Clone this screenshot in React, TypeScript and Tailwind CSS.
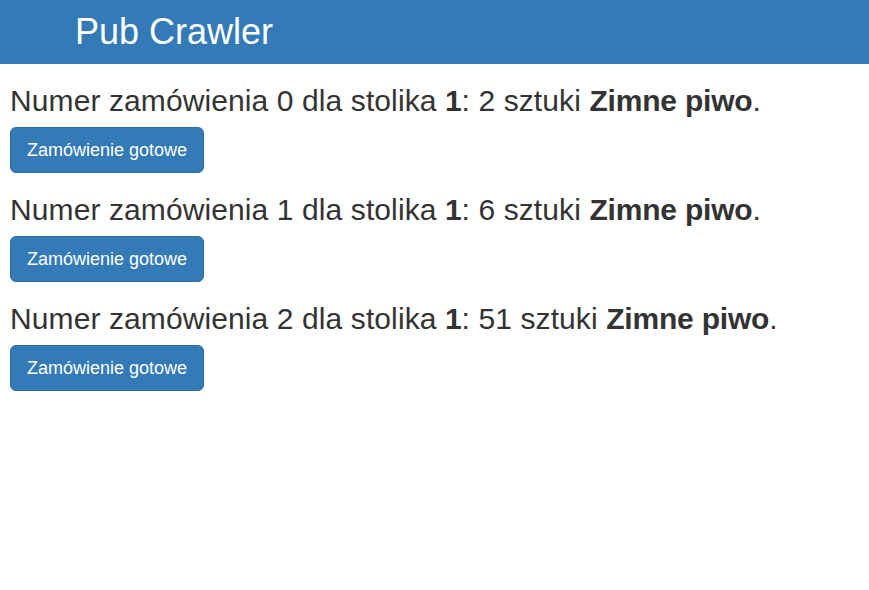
const orders = [
  { id: 0, table: 1, qty: 2, name: 'Zimne piwo' },
  { id: 1, table: 1, qty: 6, name: 'Zimne piwo' },
  { id: 2, table: 1, qty: 51, name: 'Zimne piwo' },
];

export default function App() {
  return (
    <div className="min-h-screen bg-white text-[#333] font-['Liberation_Sans',Arial,sans-serif]">
      {/* Navbar */}
      <header className="h-16 bg-[#337ab7] flex items-center pl-[75px]">
        <span className="text-white text-[36px] leading-none">Pub Crawler</span>
      </header>

      {/* Orders */}
      <main className="px-[10px]">
        {orders.map((o) => (
          <div key={o.id}>
            <h2 className="mt-5 mb-[10px] text-[30px] leading-[1.1] font-medium tracking-[0.1px]">
              Numer zamówienia {o.id} dla stolika <b className="tracking-[-0.1px]">{o.table}</b>: {o.qty} sztuki{' '}
              <b className="tracking-[-0.2px]">{o.name}</b>.
            </h2>
            <button className="px-4 py-[10px] text-[18px] leading-[24px] text-white bg-[#337ab7] border border-[#2e6da4] rounded-md">
              Zamówienie gotowe
            </button>
          </div>
        ))}
      </main>
    </div>
  );
}
